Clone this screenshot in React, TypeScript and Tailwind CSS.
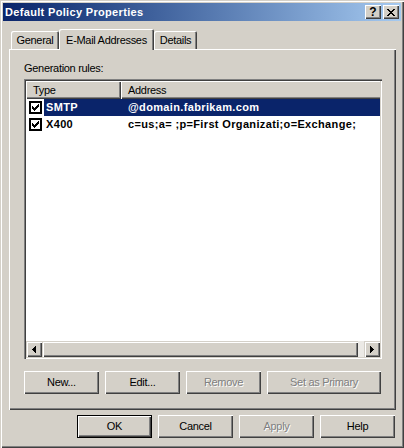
import React from "react";

// classic 3D edges
const raised =
  "shadow-[inset_1px_1px_0_#ffffff,inset_-1px_-1px_0_#404040,inset_-2px_-2px_0_#808080]";
const raisedSoft =
  "shadow-[inset_1px_1px_0_#d4d0c8,inset_2px_2px_0_#ffffff,inset_-1px_-1px_0_#404040,inset_-2px_-2px_0_#808080]";
const sunken =
  "shadow-[inset_1px_1px_0_#808080,inset_2px_2px_0_#404040,inset_-1px_-1px_0_#ffffff,inset_-2px_-2px_0_#d4d0c8]";

const Pixels = ({ rows, color = "#000" }: { rows: string[]; color?: string }) => (
  <svg
    width={rows[0].length}
    height={rows.length}
    viewBox={`0 0 ${rows[0].length} ${rows.length}`}
    shapeRendering="crispEdges"
  >
    {rows.map((r, y) =>
      r.split("").map((c, x) =>
        c === "1" ? <rect key={`${x}-${y}`} x={x} y={y} width={1} height={1} fill={color} /> : null
      )
    )}
  </svg>
);

const closeX = ["11000011", "01100110", "00111100", "00011000", "00111100", "01100110", "11000011"];
const checkMark = ["0000001", "0000011", "1000111", "1101110", "1111100", "0111000", "0010000"];
const arrowLeft = ["0001", "0011", "0111", "1111", "0111", "0011", "0001"];
const arrowRight = ["1000", "1100", "1110", "1111", "1110", "1100", "1000"];

const CheckBox = () => (
  <div className="w-[13px] h-[13px] bg-black p-[2px] shrink-0">
    <div className="w-[9px] h-[9px] bg-white flex items-center justify-center">
      <Pixels rows={checkMark} />
    </div>
  </div>
);

const Button = ({
  label,
  width,
  disabled = false,
  isDefault = false,
}: {
  label: string;
  width: string;
  disabled?: boolean;
  isDefault?: boolean;
}) => (
  <div className={`${width} h-[23px] ${isDefault ? "border border-black" : ""}`}>
    <div
      className={`w-full h-full flex items-center justify-center ${raised} ${
        disabled ? "text-[#808080] [text-shadow:1px_1px_0_#ffffff]" : "text-black"
      }`}
    >
      {label}
    </div>
  </div>
);

const rows = [
  { type: "SMTP", address: "@domain.fabrikam.com", selected: true },
  { type: "X400", address: "c=us;a= ;p=First Organizati;o=Exchange;", selected: false },
];

export default function App() {
  return (
    <div
      className={`w-[404px] h-[448px] bg-[#d4d0c8] p-[3px] flex flex-col ${raisedSoft} font-['Liberation_Sans',Arial,sans-serif] text-[11px] tracking-[-0.3px] text-black select-none`}
    >
      {/* title bar */}
      <div className="h-[18px] shrink-0 bg-linear-to-r from-[#0a246a] to-[#a6caf0] flex items-center pl-[2px] pr-[2px]">
        <span className="flex-1 text-white font-bold tracking-[0.33px] leading-none">
          Default Policy Properties
        </span>
        <div className={`w-[16px] h-[14px] bg-[#d4d0c8] ${raised} flex items-center justify-center font-bold text-[12px] tracking-normal leading-none pb-[1px]`}>
          ?
        </div>
        <div className={`ml-[2px] w-[16px] h-[14px] bg-[#d4d0c8] ${raised} flex items-center justify-center pr-[1px]`}>
          <Pixels rows={closeX} />
        </div>
      </div>

      {/* tabs */}
      <div className="mt-[8px] h-[20px] shrink-0 flex items-end pl-[8px]">
        <div className="w-[48px] h-[18px] rounded-t-[2px] shadow-[inset_1px_1px_0_#ffffff,inset_-1px_0_0_#404040,inset_-2px_0_0_#808080] flex items-center justify-center pt-[1px]">
          General
        </div>
        <div className="relative z-10 -mb-[1px] w-[95px] h-[21px] bg-[#d4d0c8] rounded-t-[2px] shadow-[inset_1px_1px_0_#ffffff,inset_-1px_0_0_#404040,inset_-2px_0_0_#808080] flex items-start justify-center pt-[3px]">
          E-Mail Addresses
        </div>
        <div className="w-[43px] h-[18px] rounded-t-[2px] shadow-[inset_1px_1px_0_#ffffff,inset_-1px_0_0_#404040,inset_-2px_0_0_#808080] flex items-center justify-center pt-[1px]">
          Details
        </div>
      </div>

      {/* tab page */}
      <div className={`ml-[6px] w-[387px] h-[361px] shrink-0 ${raised} pl-[15px] pt-[13px] flex flex-col`}>
        <div className="h-[13px] leading-[13px]">Generation rules:</div>

        <div className={`mt-[4px] w-[358px] h-[280px] bg-white p-[2px] ${sunken}`}>
          <div className="w-full h-full flex flex-col bg-white overflow-hidden">
            {/* header */}
            <div className="h-[18px] shrink-0 flex bg-[#d4d0c8]">
              <div className={`w-[95px] h-full ${raised} flex items-center pl-[7px]`}>Type</div>
              <div className="flex-1 h-full shadow-[inset_1px_1px_0_#ffffff,inset_0_-1px_0_#404040,inset_0_-2px_0_#808080] flex items-center pl-[7px]">
                Address
              </div>
            </div>

            {rows.map((r) => (
              <div key={r.type} className="h-[17px] shrink-0 flex items-center pl-[3px]">
                <CheckBox />
                <div
                  className={`ml-[2px] flex-1 h-full flex items-center font-bold tracking-[0.35px] whitespace-nowrap ${
                    r.selected ? "bg-[#0a246a] text-white" : "text-black"
                  }`}
                >
                  <span className="w-[77px] pl-[2px]">{r.type}</span>
                  <span className="pl-[7px]">{r.address}</span>
                </div>
              </div>
            ))}

            <div className="flex-1" />

            {/* horizontal scrollbar */}
            <div className="h-[16px] shrink-0 flex bg-[#ebe9e5]">
              <div className={`w-[16px] h-full bg-[#d4d0c8] ${raisedSoft} flex items-center justify-center pr-[1px]`}>
                <Pixels rows={arrowLeft} />
              </div>
              <div className={`w-[316px] h-full bg-[#d4d0c8] ${raisedSoft}`} />
              <div className="flex-1" />
              <div className={`w-[16px] h-full bg-[#d4d0c8] ${raisedSoft} flex items-center justify-center`}>
                <Pixels rows={arrowRight} />
              </div>
            </div>
          </div>
        </div>

        <div className="mt-[12px] flex gap-[6px]">
          <Button label="New..." width="w-[75px]" />
          <Button label="Edit..." width="w-[75px]" />
          <Button label="Remove" width="w-[75px]" disabled />
          <Button label="Set as Primary" width="w-[114px]" disabled />
        </div>
      </div>

      {/* dialog buttons */}
      <div className="mt-[5px] flex justify-end gap-[6px] pr-[6px]">
        <Button label="OK" width="w-[75px]" isDefault />
        <Button label="Cancel" width="w-[75px]" />
        <Button label="Apply" width="w-[75px]" disabled />
        <Button label="Help" width="w-[75px]" />
      </div>
    </div>
  );
}
